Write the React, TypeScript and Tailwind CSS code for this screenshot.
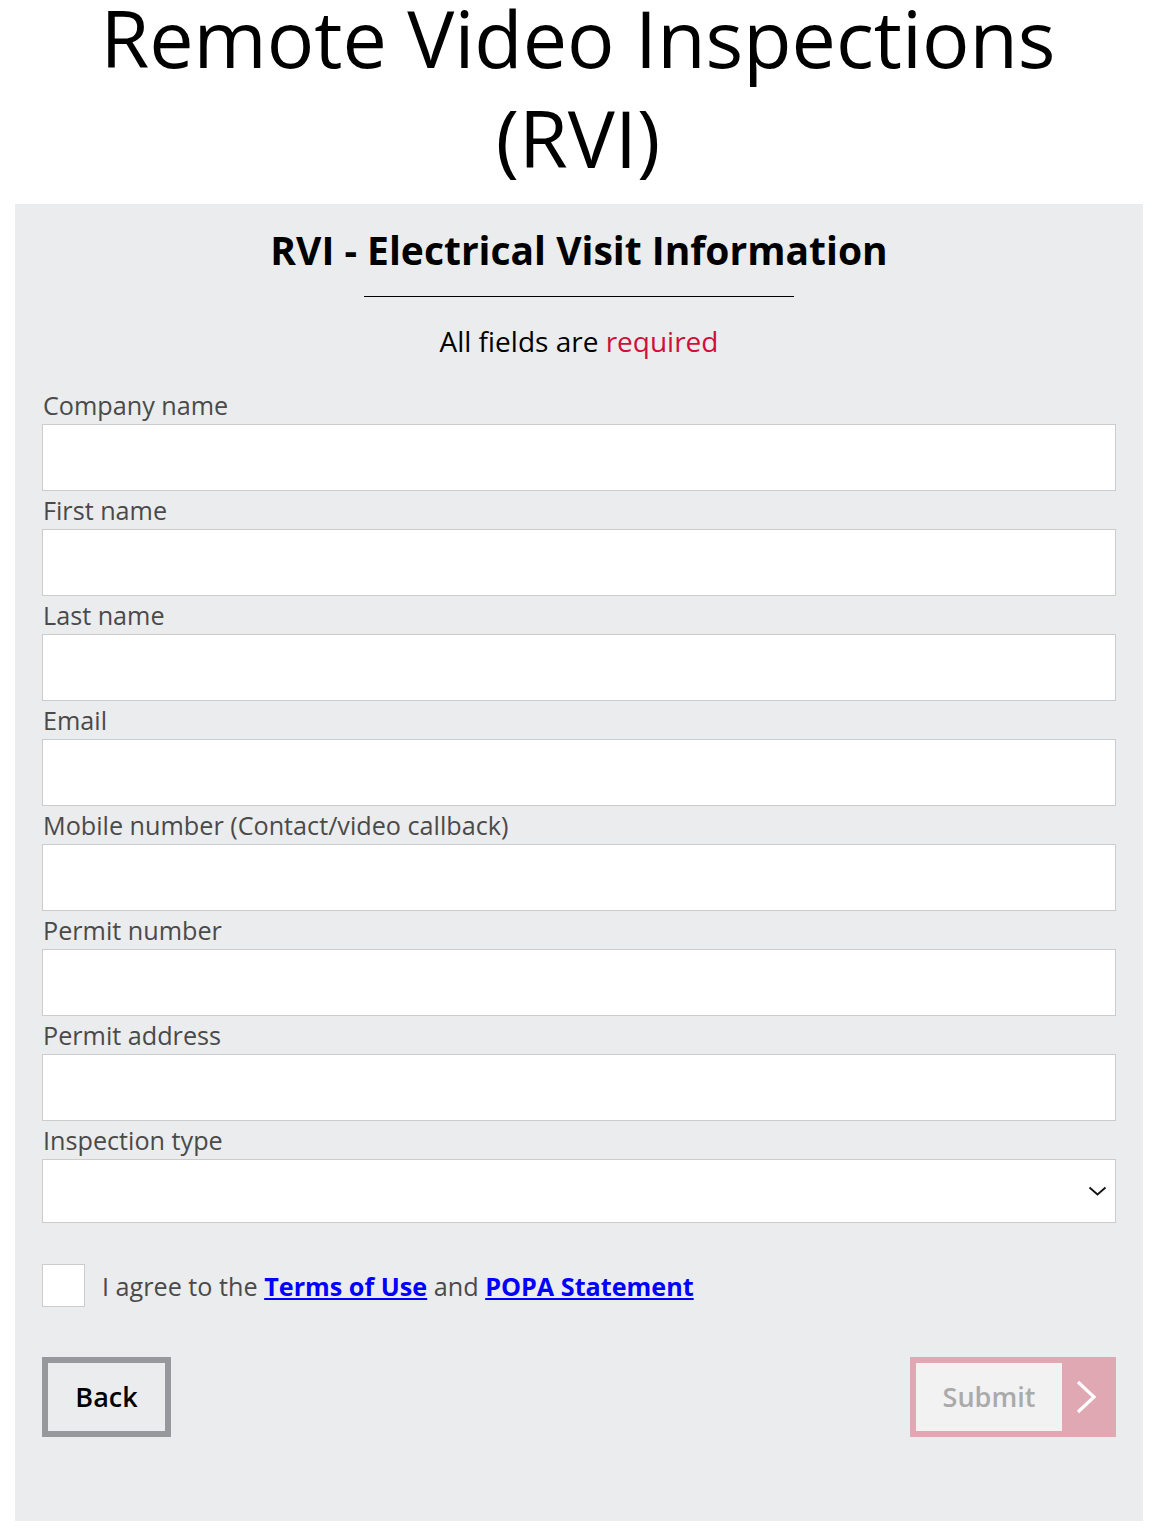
import React from "react";

const fields = [
  "Company name",
  "First name",
  "Last name",
  "Email",
  "Mobile number (Contact/video callback)",
  "Permit number",
  "Permit address",
];

export default function App() {
  return (
    <div className="bg-white font-['Open_Sans',sans-serif] text-black">
      <h1 className="mt-[-12px] mb-[16px] text-center text-[79px] leading-[100px] font-normal">
        Remote Video Inspections
        <br />
        (RVI)
      </h1>

      <div className="ml-[15px] mb-[11px] w-[1128px] bg-[#ebeced] px-[27px] pt-[22px] pb-[84px]">
        <h2 className="text-center text-[39px] leading-[48px] font-bold">
          RVI - Electrical Visit Information
        </h2>
        <div className="mx-auto mt-[22px] h-px w-[430px] bg-black" />
        <p className="mt-[25px] text-center text-[28px] leading-[38px]">
          All fields are <span className="text-[#d0103a]">required</span>
        </p>

        <div className="mt-[26px] flex flex-col">
          {fields.map((label) => (
            <label key={label} className="flex flex-col">
              <span className="pl-px text-[25.2px] leading-[38px] text-[#4a4a4a]">{label}</span>
              <input
                type="text"
                className="h-[67px] w-full border border-[#cccccc] bg-white px-3 text-[22px] outline-none"
              />
            </label>
          ))}
          <label className="flex flex-col">
            <span className="pl-px text-[25.2px] leading-[38px] text-[#4a4a4a]">Inspection type</span>
            <div className="relative">
              <select className="h-[64px] w-full appearance-none border border-[#cccccc] bg-white px-3 text-[22px] outline-none">
                <option value=""></option>
              </select>
              <svg
                className="pointer-events-none absolute right-[9px] top-[27px]"
                width="19"
                height="10"
                viewBox="0 0 19 10"
                fill="none"
                stroke="#111"
                strokeWidth="1.8"
              >
                <path d="M1.5 1.5 9.5 8.5 17.5 1.5" />
              </svg>
            </div>
          </label>
        </div>

        <div className="mt-[41px] flex items-center gap-[17px]">
          <span className="h-[43px] w-[43px] border border-[#cccccc] bg-white" />
          <p className="text-[25.2px] leading-[34px] text-[#4a4a4a]">
            I agree to the{" "}
            <a href="#" className="font-bold text-[#0000ff] underline">
              Terms of Use
            </a>{" "}
            and{" "}
            <a href="#" className="font-bold text-[#0000ff] underline">
              POPA Statement
            </a>
          </p>
        </div>

        <div className="mt-[50px] flex items-center justify-between">
          <button className="flex h-[80px] w-[129px] items-center justify-center border-[6px] border-[#97989c] text-[27px] font-semibold">
            Back
          </button>
          <div className="flex h-[80px] bg-[#e0a8b2] p-[6px]">
            <span className="flex h-[68px] w-[146px] items-center justify-center bg-[#f2f2f2] text-[27px] font-semibold text-[#aaaaaa]">
              Submit
            </span>
            <span className="flex w-[48px] items-center justify-center">
              <svg width="22" height="34" viewBox="0 0 22 34" fill="none" stroke="#fff" strokeWidth="3.2">
                <path d="M3 2 19 17 3 32" />
              </svg>
            </span>
          </div>
        </div>
      </div>
    </div>
  );
}
